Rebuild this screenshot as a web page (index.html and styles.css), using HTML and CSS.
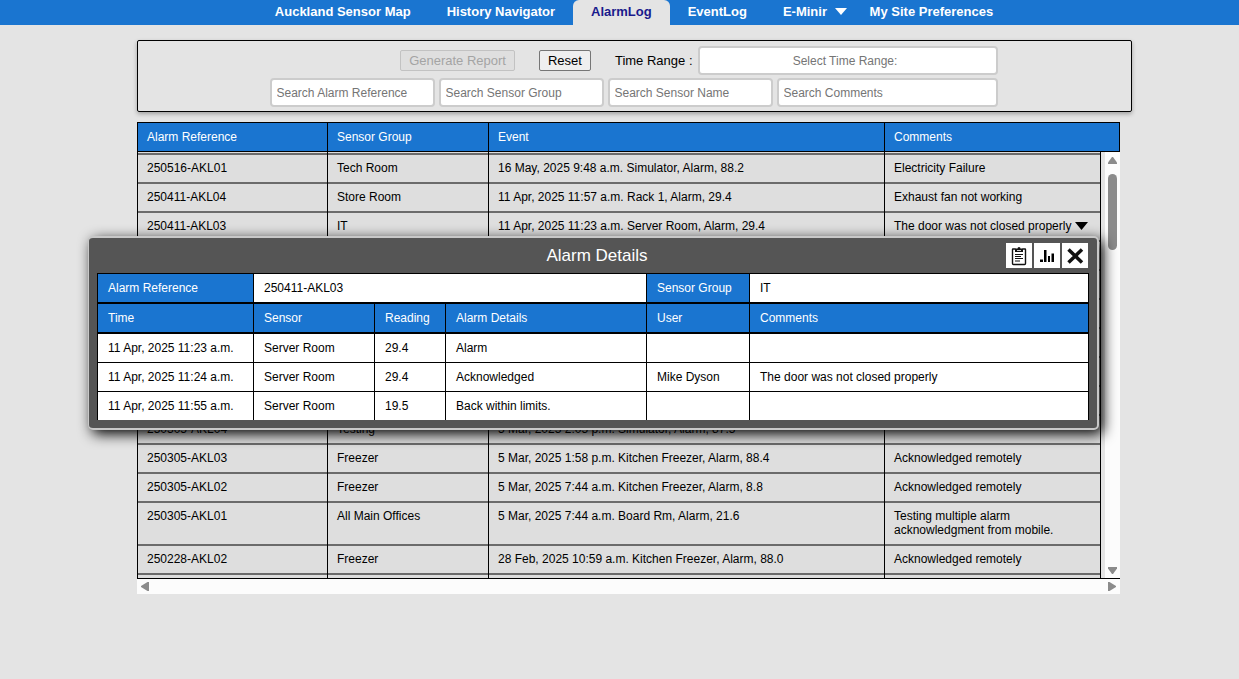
FILE: index.html
```html
<!DOCTYPE html>
<html lang="en">
<head>
    <meta charset="UTF-8">
    <meta name="viewport" content="width=device-width, initial-scale=1.0">
    <title>AlarmLog</title>
    <link rel="stylesheet" href="styles.css">
</head>
<body>

    <nav class="menu">
        <a href="#">Auckland Sensor Map</a>
        <a href="#">History Navigator</a>
        <a href="#" class="active">AlarmLog</a>
        <a href="#">EventLog</a>
        <a href="#" class="has-sub">E-Minir <svg class="arrow" width="12" height="7" viewBox="0 0 12 7"><path d="M0 0h12L6 7z"/></svg></a>
        <a href="#">My Site Preferences</a>
    </nav>

    <main>
        <form class="search-box">
            <div class="search-fields">
                <div class="search-row top-row">
                    <button type="button" disabled>Generate Report</button>
                    <button type="reset">Reset</button>
                    <div class="range">
                        <label for="timeRange">Time Range :</label>
                        <input type="text" id="timeRange" placeholder="Select Time Range:">
                    </div>
                </div>
                <div class="search-row">
                    <input type="text" aria-label="Alarm Reference" placeholder="Search Alarm Reference">
                    <input type="text" aria-label="Sensor Group" placeholder="Search Sensor Group">
                    <input type="text" aria-label="Sensor Name" placeholder="Search Sensor Name">
                    <input type="text" aria-label="Comments" class="wide" placeholder="Search Comments">
                </div>
            </div>
        </form>

        <div class="log">
            <table class="log-head">
                <colgroup><col class="c-ref"><col class="c-group"><col class="c-event"><col></colgroup>
                <tr><th>Alarm Reference</th><th>Sensor Group</th><th>Event</th><th>Comments</th></tr>
            </table>
            <div class="log-body">
                <div class="log-rows">
                    <table class="log-table">
                        <colgroup><col class="c-ref"><col class="c-group"><col class="c-event"><col></colgroup>
                        <tr class="cut"><td></td><td></td><td></td><td></td></tr>
                        <tr><td>250516-AKL01</td><td>Tech Room</td><td>16 May, 2025 9:48 a.m. Simulator, Alarm, 88.2</td><td>Electricity Failure</td></tr>
                        <tr><td>250411-AKL04</td><td>Store Room</td><td>11 Apr, 2025 11:57 a.m. Rack 1, Alarm, 29.4</td><td>Exhaust fan not working</td></tr>
                        <tr><td>250411-AKL03</td><td>IT</td><td>11 Apr, 2025 11:23 a.m. Server Room, Alarm, 29.4</td><td>The door was not closed properly <svg class="arrow" width="13" height="8" viewBox="0 0 13 8"><path d="M0 0h13L6.500 8z"/></svg></td></tr>
                        <tr><td></td><td></td><td></td><td></td></tr>
                        <tr><td></td><td></td><td></td><td></td></tr>
                        <tr><td></td><td></td><td></td><td></td></tr>
                        <tr><td></td><td></td><td></td><td></td></tr>
                        <tr><td></td><td></td><td></td><td></td></tr>
                        <tr><td></td><td></td><td></td><td></td></tr>
                        <tr><td>250305-AKL04</td><td>Testing</td><td>5 Mar, 2025 2:05 p.m. Simulator, Alarm, 87.5</td><td></td></tr>
                        <tr><td>250305-AKL03</td><td>Freezer</td><td>5 Mar, 2025 1:58 p.m. Kitchen Freezer, Alarm, 88.4</td><td>Acknowledged remotely</td></tr>
                        <tr><td>250305-AKL02</td><td>Freezer</td><td>5 Mar, 2025 7:44 a.m. Kitchen Freezer, Alarm, 8.8</td><td>Acknowledged remotely</td></tr>
                        <tr><td>250305-AKL01</td><td>All Main Offices</td><td>5 Mar, 2025 7:44 a.m. Board Rm, Alarm, 21.6</td><td>Testing multiple alarm acknowledgment from mobile.</td></tr>
                        <tr><td>250228-AKL02</td><td>Freezer</td><td>28 Feb, 2025 10:59 a.m. Kitchen Freezer, Alarm, 88.0</td><td>Acknowledged remotely</td></tr>
                        <tr class="cut last"><td></td><td></td><td></td><td></td></tr>
                    </table>
                </div>
                <div class="bar-v">
                    <svg width="9" height="7" viewBox="0 0 9 7"><path d="M4 0h1l4 5.500V7H0V5.500z"/></svg>
                    <div class="thumb"></div>
                    <svg class="end" width="9" height="7" viewBox="0 0 9 7"><path d="M0 0h9v1.500L5 7H4L0 1.500z"/></svg>
                </div>
            </div>
            <div class="bar-h">
                <svg width="8" height="9" viewBox="0 0 8 9"><path d="M8 0v9H6.500L0 5V4l6.500-4z"/></svg>
                <svg width="8" height="9" viewBox="0 0 8 9"><path d="M0 0v9h1.500L8 5V4L1.500 0z"/></svg>
            </div>
        </div>
    </main>

    <section class="details" role="dialog" aria-labelledby="detailsTitle">
        <div class="details-head">
            <h2 id="detailsTitle">Alarm Details</h2>
            <div class="tools">
                <button type="button" aria-label="Report">
                    <svg width="26" height="25" viewBox="0 0 26 25"><path d="M9.500 6H7q-.5 0-.5.5v14q0 1 1 1h11q1 0 1-1v-14q0-.5-.5-.5h-2.500" fill="none" stroke="#111" stroke-width="1.400"/><path d="M9 9V5.500h2.500Q11.500 4 13 4t1.500 1.500H17V9z" fill="#111"/><path d="M11 7.500h4" stroke="#fff" stroke-width=".8"/><path d="M9 11.500h8M9 13.500h6M9 15.500h8M9 18h5" stroke="#111" stroke-width="1"/></svg>
                </button>
                <button type="button" aria-label="Graph">
                    <svg width="26" height="25" viewBox="0 0 26 25"><path d="M6 16.500h3V19H6zM10 7h2.500v12H10zM14 13h2v6h-2zM17.500 10.500H20V19h-2.500z"/></svg>
                </button>
                <button type="button" aria-label="Close">
                    <svg width="26" height="25" viewBox="0 0 26 25"><path d="M6.500 6.500l13.500 13M20 6.500l-13.500 13" stroke="#111" stroke-width="3.500"/></svg>
                </button>
            </div>
        </div>
        <table class="details-table">
            <colgroup><col class="d-time"><col class="d-sensor"><col class="d-reading"><col class="d-alarm"><col class="d-user"><col></colgroup>
            <tr class="info"><th>Alarm Reference</th><td colspan="3">250411-AKL03</td><th>Sensor Group</th><td>IT</td></tr>
            <tr class="heads"><th>Time</th><th>Sensor</th><th>Reading</th><th>Alarm Details</th><th>User</th><th>Comments</th></tr>
            <tr><td>11 Apr, 2025 11:23 a.m.</td><td>Server Room</td><td>29.4</td><td>Alarm</td><td></td><td></td></tr>
            <tr><td>11 Apr, 2025 11:24 a.m.</td><td>Server Room</td><td>29.4</td><td>Acknowledged</td><td>Mike Dyson</td><td>The door was not closed properly</td></tr>
            <tr><td>11 Apr, 2025 11:55 a.m.</td><td>Server Room</td><td>19.5</td><td>Back within limits.</td><td></td><td></td></tr>
        </table>
    </section>

</body>
</html>
```

FILE: styles.css
```css
* {
    box-sizing: border-box;
}
body {
    font-family: "Liberation Sans", Arial, sans-serif;
    font-size: 12px;
    line-height: 14px;
    background-color: #e4e4e4;
    color: #000;
    margin: 0;
}
table {
    width: 100%;
    table-layout: fixed;
    border-collapse: separate;
    border-spacing: 0;
}
th {
    font-weight: normal;
    text-align: left;
}
svg {
    display: block;
}
.arrow {
    display: inline-block;
    fill: currentColor;
}

/* top menu */
.menu {
    display: flex;
    justify-content: center;
    height: 25px;
    padding-left: 29px;
    background-color: #1a75d0;
}
.menu a {
    padding: 0 18px;
    font-size: 13px;
    line-height: 24px;
    font-weight: bold;
    color: #fff;
    text-decoration: none;
}
.menu a.active {
    color: #1a1a8c;
    background-color: #e4e4e4;
    border-radius: 6px 6px 0 0;
}
.menu .has-sub {
    padding-right: 5px;
}
.menu .arrow {
    margin: 0 0 1px 4px;
}

main {
    padding: 15px 107px 0 137px;
}

/* search panel */
.search-box {
    display: flex;
    justify-content: center;
    padding: 5px 2px 4px 0;
    border: 1px solid #000;
    border-radius: 2px;
    box-shadow: 0 2px 4px rgba(0, 0, 0, 0.3);
}
.search-fields {
    display: flex;
    flex-direction: column;
    gap: 3px;
    width: 728px;
}
.search-row {
    display: flex;
    gap: 4px;
}
.top-row {
    justify-content: flex-end;
    align-items: center;
    gap: 24px;
}
.range {
    display: flex;
    align-items: center;
    gap: 5px;
    font-size: 13px;
}
.search-box button {
    height: 21px;
    padding: 0 8px;
    font-family: inherit;
    font-size: 13px;
    color: #000;
    background-color: #efefef;
    border: 1px solid #767676;
    border-radius: 2px;
}
.search-box button:disabled {
    color: #a4a4a4;
    background-color: #dfdfdf;
    border-color: #c2c2c2;
}
.search-box input {
    width: 165px;
    height: 29px;
    padding: 0 5px;
    font-family: inherit;
    font-size: 12px;
    background-color: #fff;
    border: 2px solid #ccc;
    border-radius: 4px;
}
.search-box input::placeholder {
    color: #757575;
}
.search-box #timeRange {
    width: 300px;
    padding-right: 10px;
    text-align: center;
}
.search-box .wide {
    flex: 1;
}

/* alarm log */
.log {
    margin: 10px 12px 0 0;
}
.c-ref {
    width: 190px;
}
.c-group {
    width: 161px;
}
.c-event {
    width: 396px;
}
.log-head th {
    height: 30px;
    padding: 0 9px;
    color: #fff;
    background-color: #1a75d0;
    border: 1px solid #000;
    border-right: none;
}
.log-head th:last-child {
    border-right: 1px solid #000;
}
.log-body {
    display: flex;
    justify-content: space-between;
    border-bottom: 1px solid #000;
}
.log-rows {
    flex: 1;
    margin-right: 4px;
}
.log-table {
    border-right: 1px solid #000;
}
.log-table td {
    height: 29px;
    padding: 6px 9px 9px;
    vertical-align: top;
    background-color: #dedede;
    border-left: 1px solid #000;
    box-shadow: inset 0 -2px #6b6b6b;
}
.log-table .cut td {
    height: 3px;
    padding: 0;
}
.log-table .last td {
    box-shadow: none;
}
.bar-v {
    display: flex;
    flex-direction: column;
    align-items: center;
    width: 15px;
    padding: 5px 0 4px;
    background-color: #fcfcfc;
    fill: #8b8b8b;
}
.bar-v .thumb {
    width: 9px;
    height: 76px;
    margin-top: 10px;
    border-radius: 5px;
    background-color: #8b8b8b;
}
.bar-v .end {
    margin-top: auto;
}
.bar-h {
    display: flex;
    justify-content: space-between;
    align-items: center;
    height: 15px;
    padding: 0 4px;
    background-color: #fcfcfc;
    fill: #8b8b8b;
}

/* details popup */
.details {
    position: absolute;
    top: 236px;
    left: 88px;
    right: 140px;
    padding: 0 8px 8px;
    background-color: #555;
    border: 2px solid #c8c8c8;
    border-left-width: 1px;
    border-radius: 5px;
    box-shadow: 4px 4px 14px #000;
}
.details-head {
    position: relative;
    height: 35px;
}
.details-head h2 {
    margin: 0;
    padding: 8px 0 8px 8px;
    font-size: 17px;
    line-height: 19px;
    font-weight: normal;
    text-align: center;
    color: #fff;
}
.tools {
    position: absolute;
    top: 5px;
    right: 1px;
    display: flex;
    gap: 2px;
}
.tools button {
    width: 26px;
    height: 25px;
    padding: 0;
    background-color: #fff;
    border: none;
}
.d-time {
    width: 156px;
}
.d-sensor {
    width: 121px;
}
.d-reading {
    width: 71px;
}
.d-alarm {
    width: 201px;
}
.d-user {
    width: 103px;
}
.details-table {
    border-right: 1px solid #000;
}
.details-table th,
.details-table td {
    height: 29px;
    padding: 0 10px;
    background-color: #fff;
    border-top: 1px solid #000;
    border-left: 1px solid #000;
}
.details-table th {
    color: #fff;
    background-color: #1a75d0;
}
.details-table .info th,
.details-table .info td,
.details-table .heads th {
    height: 30px;
    border-bottom: 1px solid #000;
}
```
